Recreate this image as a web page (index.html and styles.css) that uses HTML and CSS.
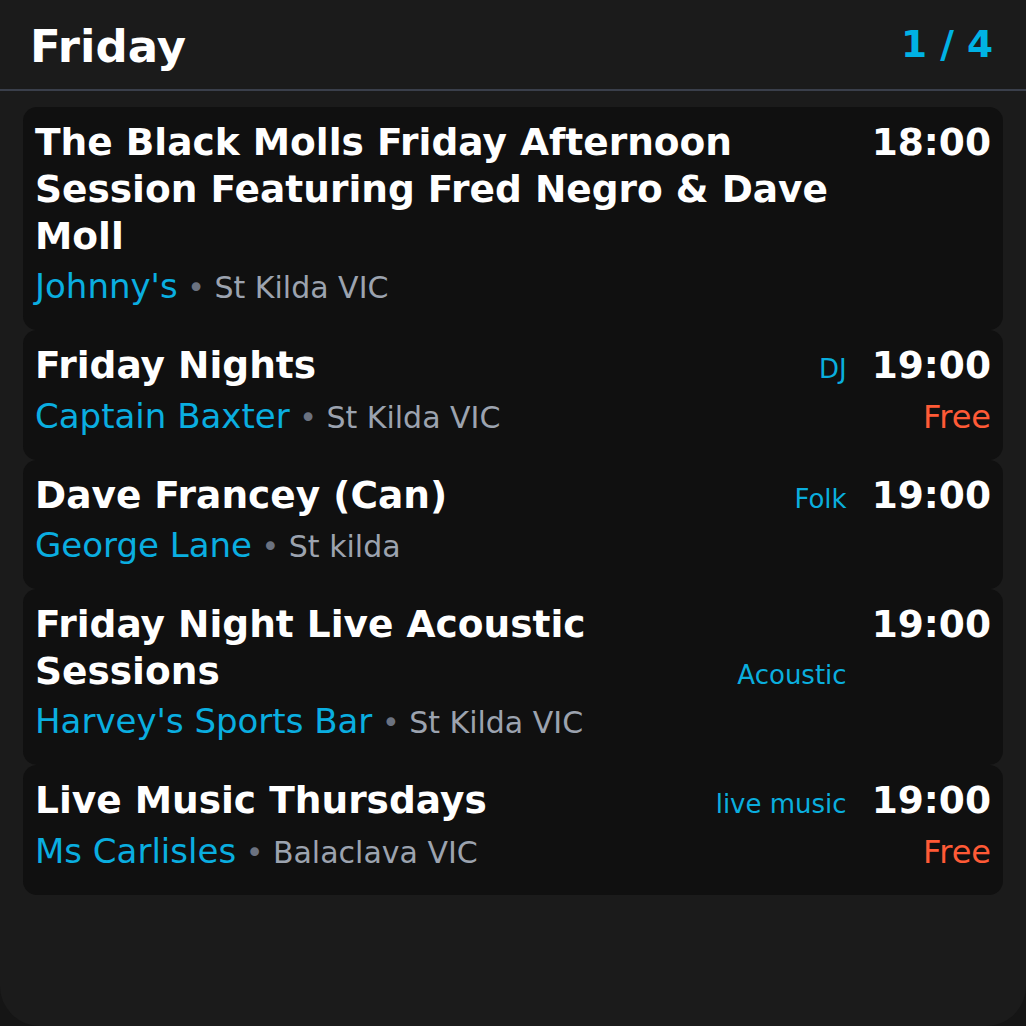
FILE: index.html
```html
<!DOCTYPE html>
<html lang="en">
<head>
<meta charset="utf-8">
<title>Friday</title>
<link rel="stylesheet" href="styles.css">
</head>
<body>
<div class="app">
  <header class="header">
    <h1 class="day">Friday</h1>
    <span class="pager">1 / 4</span>
  </header>
  <main class="list">
    <article class="card">
      <div class="head"><h2 class="title">The Black Molls Friday Afternoon Session Featuring Fred Negro &amp; Dave Moll</h2></div>
      <div class="time">18:00</div>
      <div class="venue"><span class="vname">Johnny's</span><span class="loc"> <span class="dot">•</span> St Kilda VIC</span></div>
    </article>
    <article class="card">
      <div class="head"><h2 class="title">Friday Nights</h2><span class="genre">DJ</span></div>
      <div class="time">19:00</div>
      <div class="venue"><span class="vname">Captain Baxter</span><span class="loc"> <span class="dot">•</span> St Kilda VIC</span></div>
      <div class="price">Free</div>
    </article>
    <article class="card">
      <div class="head"><h2 class="title">Dave Francey (Can)</h2><span class="genre">Folk</span></div>
      <div class="time">19:00</div>
      <div class="venue"><span class="vname">George Lane</span><span class="loc"> <span class="dot">•</span> St kilda</span></div>
    </article>
    <article class="card">
      <div class="head"><h2 class="title">Friday Night Live Acoustic Sessions</h2><span class="genre">Acoustic</span></div>
      <div class="time">19:00</div>
      <div class="venue"><span class="vname">Harvey's Sports Bar</span><span class="loc"> <span class="dot">•</span> St Kilda VIC</span></div>
    </article>
    <article class="card">
      <div class="head"><h2 class="title">Live Music Thursdays</h2><span class="genre">live music</span></div>
      <div class="time">19:00</div>
      <div class="venue"><span class="vname">Ms Carlisles</span><span class="loc"> <span class="dot">•</span> Balaclava VIC</span></div>
      <div class="price">Free</div>
    </article>
  </main>
</div>
</body>
</html>
```
FILE: styles.css
```css
html, body {
  margin: 0;
  padding: 0;
}
body {
  background: #151515;
  font-family: "DejaVu Sans", Verdana, sans-serif;
  color: #ffffff;
}
.app {
  width: 1026px;
  height: 1026px;
  background: #1b1b1b;
  border-radius: 0 0 40px 40px;
  overflow: hidden;
  box-sizing: border-box;
}
.header {
  height: 89px;
  padding: 0 33px 0 30px;
  display: flex;
  align-items: center;
  justify-content: space-between;
  border-bottom: 2px solid #3a3f4b;
}
.day {
  margin: 5px 0 0 0;
  font-size: 45px;
  font-weight: bold;
  line-height: 1.2;
}
.pager {
  font-size: 37.5px;
  font-weight: bold;
  color: #00b2e4;
  line-height: 1.2;
}
.list {
  padding: 16px 23px 0 23px;
  display: flex;
  flex-direction: column;
}
.card {
  background: #101010;
  border-radius: 14px;
  padding: 12px 12px 16px 12px;
  display: grid;
  grid-template-columns: 1fr auto;
  column-gap: 25px;
}
.head {
  grid-column: 1;
  grid-row: 1;
  display: flex;
  min-width: 0;
}
.title {
  flex: 1;
  margin: 0;
  font-size: 37.5px;
  line-height: 47px;
  font-weight: bold;
  color: #ffffff;
}
.genre {
  align-self: flex-end;
  margin-left: 26px;
  font-size: 26px;
  line-height: 37px;
  margin-bottom: 1px;
  color: #0aaede;
  white-space: nowrap;
}
.time {
  grid-column: 2;
  grid-row: 1;
  align-self: start;
  justify-self: end;
  font-size: 37.5px;
  line-height: 47px;
  font-weight: bold;
  color: #ffffff;
}
.venue {
  grid-column: 1;
  grid-row: 2;
  margin-top: 5px;
  align-self: baseline;
  line-height: 42px;
}
.vname {
  font-size: 34px;
  color: #0aaee0;
}
.loc {
  font-size: 30px;
  color: #9ca3af;
}
.dot {
  color: #6b7280;
}
.price {
  grid-column: 2;
  grid-row: 2;
  justify-self: end;
  align-self: baseline;
  margin-top: 7px;
  font-size: 32px;
  line-height: 42px;
  color: #ff5a36;
}
```
